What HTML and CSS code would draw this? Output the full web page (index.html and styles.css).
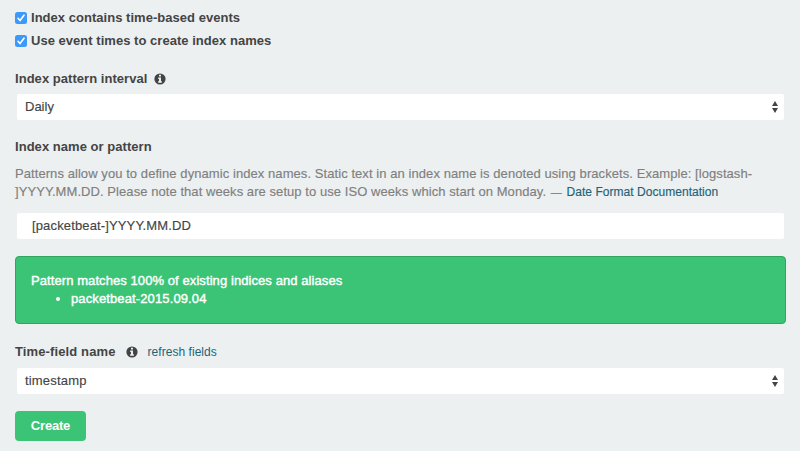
FILE: index.html
```html
<!DOCTYPE html>
<html lang="en">
<head>
<meta charset="utf-8">
<title>Configure an index pattern</title>
<link rel="stylesheet" href="styles.css">
</head>
<body>
<svg class="defs" aria-hidden="true">
  <symbol id="check" viewBox="0 0 12 12"><path d="M3 6.300 5 8.600 9 3.200" fill="none" stroke="#fff" stroke-width="1.6" stroke-linecap="round" stroke-linejoin="round"/></symbol>
  <symbol id="info" viewBox="0 0 12 12"><circle cx="6" cy="6" r="5.600" fill="#444"/><path d="M5 1.800h2v1.700H5zM4.200 4.600H7v3.700h.9v1.400H4.100V8.300h.9V6h-.8z" fill="#ecf0f1"/></symbol>
  <symbol id="arrows" viewBox="0 0 6 12"><path d="M3 0 6 5H0zM0 7h6L3 12z" fill="#444"/></symbol>
</svg>
<form class="form">
  <div class="check"><span class="box"><svg><use href="#check"/></svg></span><span>Index contains time-based events</span></div>
  <div class="check"><span class="box"><svg><use href="#check"/></svg></span><span>Use event times to create index names</span></div>

  <div class="label interval"><span>Index pattern interval</span><svg class="info"><use href="#info"/></svg></div>
  <div class="field"><span>Daily</span><svg class="arrows"><use href="#arrows"/></svg></div>

  <div class="label pattern"><span>Index name or pattern</span></div>
  <p class="help">Patterns allow you to define dynamic index names. Static text in an index name is denoted using brackets. Example: [logstash-<br><span class="note">]YYYY.MM.DD. Please note that weeks are setup to use ISO weeks which start on Monday. <span class="dash">—</span></span> <a class="link">Date Format Documentation</a></p>
  <div class="field text"><span>[packetbeat-]YYYY.MM.DD</span></div>

  <div class="alert">
    <div>Pattern matches 100% of existing indices and aliases</div>
    <ul><li>packetbeat-2015.09.04</li></ul>
  </div>

  <div class="label time"><span>Time-field name</span><svg class="info"><use href="#info"/></svg><a class="link refresh">refresh fields</a></div>
  <div class="field stamp"><span>timestamp</span><svg class="arrows"><use href="#arrows"/></svg></div>
  <button class="create" type="button">Create</button>
</form>
</body>
</html>
```
FILE: styles.css
```css
* { box-sizing: border-box; }
body {
  margin: 0;
  background: #ecf0f1;
  color: #444;
  font: 13px/18px "Liberation Sans", Arial, sans-serif;
}
.defs { position: absolute; width: 0; height: 0; }
.form { padding: 9px 14px 0 15px; white-space: nowrap; }
.check { display: flex; align-items: center; height: 18px; margin-bottom: 5px; font-weight: bold; letter-spacing: 0.03px; }
.box { width: 12px; height: 12px; margin-right: 4px; border-radius: 2.5px; background: #3b99fc; }
.box svg { display: block; width: 12px; height: 12px; }
.label { display: flex; align-items: center; height: 18px; font-weight: bold; letter-spacing: 0.04px; }
.interval { margin-top: 20px; margin-bottom: 6px; }
.pattern { margin-top: 18px; margin-bottom: 9px; }
.time { margin-top: 19px; margin-bottom: 7px; letter-spacing: 0.12px; }
.info { width: 12px; height: 12px; margin-left: 7px; }
.time .info { margin-left: 10px; }
.field {
  display: flex;
  align-items: center;
  justify-content: space-between;
  height: 26px;
  margin: 0 2px;
  padding: 0 6px 0 8px;
  border-radius: 2px;
  background: #fff;
  -webkit-text-stroke: 0.15px currentColor;
}
.text { padding-left: 15px; letter-spacing: 0.14px; }
.stamp { letter-spacing: 0.18px; }
.arrows { width: 6px; height: 12px; }
.help { margin: 0 0 12px; color: #7f7f7f; letter-spacing: 0.07px; -webkit-text-stroke: 0.15px currentColor; }
.note { letter-spacing: 0.065px; }
.dash { margin: 0 1px; font-size: 11px; line-height: 1; }
.link { color: #1f6377; font-size: 12px; font-weight: normal; letter-spacing: 0.04px; }
.refresh { margin-left: 10px; }
.alert {
  height: 68px;
  margin-top: 17px;
  padding: 15px;
  border: 1px solid #2fa55d;
  border-radius: 4px;
  background: #3bc475;
  color: #fff;
  letter-spacing: 0.08px;
  -webkit-text-stroke: 0.4px #fff;
}
.alert ul { margin: 0; padding-left: 40px; }
.alert li { letter-spacing: 0.12px; }
.create {
  display: block;
  width: 71px;
  height: 30px;
  margin-top: 17px;
  padding: 0;
  border: 0;
  border-radius: 4px;
  background: #3bc475;
  color: #fff;
  font: bold 13px/18px "Liberation Sans", Arial, sans-serif;
  letter-spacing: -0.2px;
}
```
